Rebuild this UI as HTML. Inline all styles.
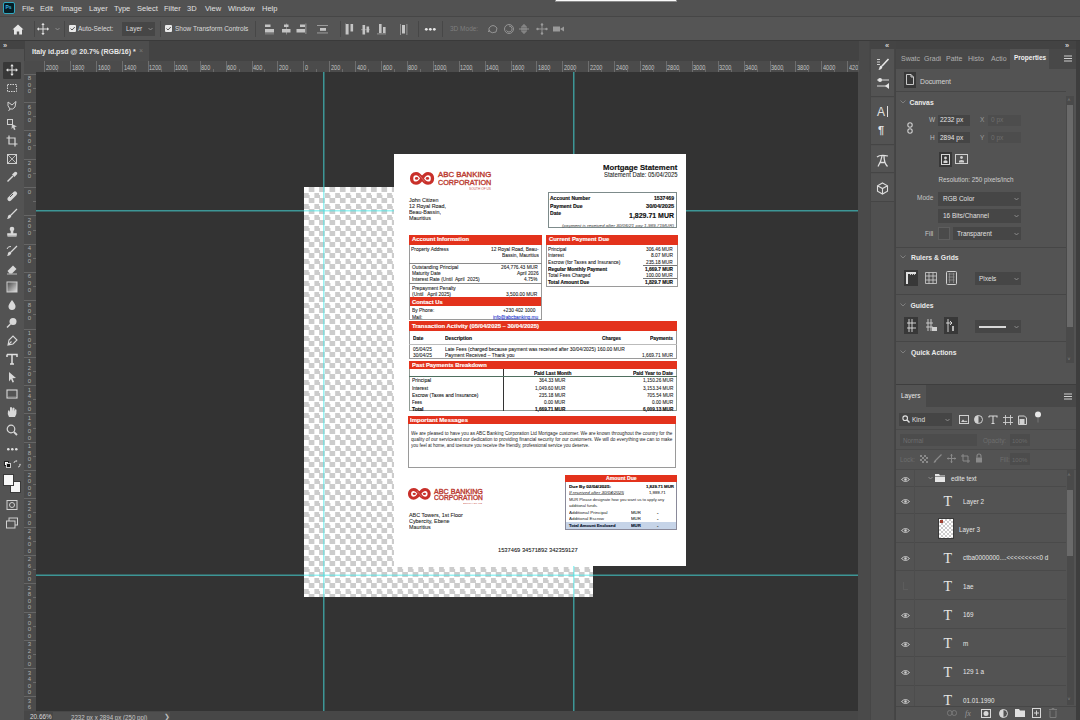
<!DOCTYPE html>
<html><head><meta charset="utf-8">
<style>
*{margin:0;padding:0;box-sizing:border-box}
html,body{width:1080px;height:720px;overflow:hidden;background:#535353;font-family:"Liberation Sans",sans-serif;color:#d6d6d6;-webkit-font-smoothing:antialiased}
.a{position:absolute}
.t{position:absolute;white-space:nowrap;line-height:1}
#menubar{left:0;top:0;width:1080px;height:16px;background:#525252}
#optbar{left:0;top:17px;width:1080px;height:23px;background:#555555}
#sep1{left:0;top:16px;width:1080px;height:1px;background:#464646}
#sep2{left:0;top:40px;width:1080px;height:1px;background:#3a3a3a}
#tabstrip{left:24px;top:41px;width:845px;height:20px;background:#434343}
#tab{left:25px;top:41px;width:124px;height:20px;background:#4d4d4d}
#hruler{left:24px;top:61px;width:834px;height:11px;background:#4b4b4b;overflow:hidden}
#vruler{left:24px;top:72px;width:12px;height:639px;background:#4b4b4b;overflow:hidden}
#hruler i{position:absolute;top:0;width:1px;height:11px;background:#6e6e6e}
#hruler b{position:absolute;top:3.2px;font-weight:normal;font-size:6px;line-height:1;color:#c4c4c4;white-space:nowrap;transform:scale(0.92,1.25);transform-origin:0 0}
#hruler u{position:absolute;top:8px;width:1px;height:3px;background:#6a6a6a}
#hruler .minor{display:none}
#vruler i{position:absolute;left:0;width:12px;height:1px;background:#666}
#vruler b{position:absolute;left:2.5px;font-weight:normal;font-size:6px;line-height:6.6px;color:#b0b0b0;text-align:center;width:6px}
#vruler u{position:absolute;left:9px;width:3px;height:1px;background:#6a6a6a}
#vruler .minor{display:none}
#canvas{left:36px;top:72px;width:822px;height:639px;background:#333333;overflow:hidden}
#status{left:24px;top:711px;width:845px;height:9px;background:#474747}
#ltool{left:0;top:41px;width:24px;height:679px;background:#535353}
#ltoolhead{left:0;top:41px;width:24px;height:8px;background:#434343}
#gap{left:859px;top:41px;width:10px;height:679px;background:#4a4a4a}
#dock{left:869px;top:41px;width:26px;height:679px;background:#474747}
#rpanel{left:895px;top:41px;width:181px;height:679px;background:#535353}
#redge{left:1076px;top:41px;width:4px;height:679px;background:#3f3f3f}
.menu{font-size:7.5px;color:#e0e0e0;top:5px}
.opt{font-size:6.5px;color:#dcdcdc}
.vsep{position:absolute;width:1px;background:#474747}
svg{position:absolute;overflow:visible}
.ic{stroke:#cfcfcf;fill:none;stroke-width:1}
.icf{fill:#cfcfcf}
</style></head><body>

<div id="menubar" class="a"></div>
<div id="sep1" class="a"></div>
<div id="optbar" class="a"></div>
<div id="sep2" class="a"></div>
<div id="tabstrip" class="a"></div>
<div id="tab" class="a"></div>
<div id="hruler" class="a"><div class="a minor"></div><i style="left:20.3px"></i><b style="left:21.8px">2000</b><u style="left:33.3px"></u><i style="left:46.2px"></i><b style="left:47.7px">1800</b><u style="left:59.2px"></u><i style="left:72.1px"></i><b style="left:73.6px">1600</b><u style="left:85.1px"></u><i style="left:98.0px"></i><b style="left:99.5px">1400</b><u style="left:111.0px"></u><i style="left:123.9px"></i><b style="left:125.4px">1200</b><u style="left:136.9px"></u><i style="left:149.8px"></i><b style="left:151.3px">1000</b><u style="left:162.8px"></u><i style="left:175.7px"></i><b style="left:177.2px">800</b><u style="left:188.7px"></u><i style="left:201.6px"></i><b style="left:203.1px">600</b><u style="left:214.6px"></u><i style="left:227.5px"></i><b style="left:229.0px">400</b><u style="left:240.4px"></u><i style="left:253.4px"></i><b style="left:254.9px">200</b><u style="left:266.4px"></u><i style="left:279.3px"></i><b style="left:280.8px">0</b><u style="left:292.2px"></u><i style="left:305.2px"></i><b style="left:306.7px">200</b><u style="left:318.1px"></u><i style="left:331.1px"></i><b style="left:332.6px">400</b><u style="left:344.1px"></u><i style="left:357.0px"></i><b style="left:358.5px">600</b><u style="left:369.9px"></u><i style="left:382.9px"></i><b style="left:384.4px">800</b><u style="left:395.8px"></u><i style="left:408.8px"></i><b style="left:410.3px">1000</b><u style="left:421.8px"></u><i style="left:434.7px"></i><b style="left:436.2px">1200</b><u style="left:447.6px"></u><i style="left:460.6px"></i><b style="left:462.1px">1400</b><u style="left:473.6px"></u><i style="left:486.5px"></i><b style="left:488.0px">1600</b><u style="left:499.4px"></u><i style="left:512.4px"></i><b style="left:513.9px">1800</b><u style="left:525.4px"></u><i style="left:538.3px"></i><b style="left:539.8px">2000</b><u style="left:551.2px"></u><i style="left:564.2px"></i><b style="left:565.7px">2200</b><u style="left:577.2px"></u><i style="left:590.1px"></i><b style="left:591.6px">2400</b><u style="left:603.0px"></u><i style="left:616.0px"></i><b style="left:617.5px">2600</b><u style="left:629.0px"></u><i style="left:641.9px"></i><b style="left:643.4px">2800</b><u style="left:654.9px"></u><i style="left:667.8px"></i><b style="left:669.3px">3000</b><u style="left:680.8px"></u><i style="left:693.7px"></i><b style="left:695.2px">3200</b><u style="left:706.7px"></u><i style="left:719.6px"></i><b style="left:721.1px">3400</b><u style="left:732.5px"></u><i style="left:745.5px"></i><b style="left:747.0px">3600</b><u style="left:758.5px"></u><i style="left:771.4px"></i><b style="left:772.9px">3800</b><u style="left:784.4px"></u><i style="left:797.3px"></i><b style="left:798.8px">4000</b><u style="left:810.2px"></u><i style="left:823.2px"></i><b style="left:824.7px">4200</b><u style="left:836.2px"></u></div>
<div id="vruler" class="a"><div class="a minor"></div><i style="top:1.8px"></i><b style="top:3.3px">8<br>0<br>0</b><u style="top:15.9px"></u><i style="top:30.1px"></i><b style="top:31.6px">6<br>0<br>0</b><u style="top:44.2px"></u><i style="top:58.4px"></i><b style="top:59.9px">4<br>0<br>0</b><u style="top:72.6px"></u><i style="top:86.7px"></i><b style="top:88.2px">2<br>0<br>0</b><u style="top:100.8px"></u><i style="top:115.0px"></i><b style="top:116.5px">0</b><u style="top:129.2px"></u><i style="top:143.3px"></i><b style="top:144.8px">2<br>0<br>0</b><u style="top:157.5px"></u><i style="top:171.6px"></i><b style="top:173.1px">4<br>0<br>0</b><u style="top:185.8px"></u><i style="top:199.9px"></i><b style="top:201.4px">6<br>0<br>0</b><u style="top:214.0px"></u><i style="top:228.2px"></i><b style="top:229.7px">8<br>0<br>0</b><u style="top:242.3px"></u><i style="top:256.5px"></i><b style="top:258.0px">1<br>0<br>0<br>0</b><u style="top:270.6px"></u><i style="top:284.8px"></i><b style="top:286.3px">1<br>2<br>0<br>0</b><u style="top:298.9px"></u><i style="top:313.1px"></i><b style="top:314.6px">1<br>4<br>0<br>0</b><u style="top:327.2px"></u><i style="top:341.4px"></i><b style="top:342.9px">1<br>6<br>0<br>0</b><u style="top:355.5px"></u><i style="top:369.7px"></i><b style="top:371.2px">1<br>8<br>0<br>0</b><u style="top:383.9px"></u><i style="top:398.0px"></i><b style="top:399.5px">2<br>0<br>0<br>0</b><u style="top:412.1px"></u><i style="top:426.3px"></i><b style="top:427.8px">2<br>2<br>0<br>0</b><u style="top:440.4px"></u><i style="top:454.6px"></i><b style="top:456.1px">2<br>4<br>0<br>0</b><u style="top:468.8px"></u><i style="top:482.9px"></i><b style="top:484.4px">2<br>6<br>0<br>0</b><u style="top:497.1px"></u><i style="top:511.2px"></i><b style="top:512.7px">2<br>8<br>0<br>0</b><u style="top:525.4px"></u><i style="top:539.5px"></i><b style="top:541.0px">3<br>0<br>0<br>0</b><u style="top:553.6px"></u><i style="top:567.8px"></i><b style="top:569.3px">3<br>2<br>0<br>0</b><u style="top:581.9px"></u><i style="top:596.1px"></i><b style="top:597.6px">3<br>4<br>0<br>0</b><u style="top:610.2px"></u><i style="top:624.4px"></i><b style="top:625.9px">3<br>6<br>0<br>0</b><u style="top:638.6px"></u></div>
<div class="a" style="left:24px;top:61px;width:12px;height:11px;background:#4b4b4b"></div>
<div id="canvas" class="a"></div>
<div id="status" class="a"></div>
<div class="a" style="left:53px;top:712px;width:117px;height:8px;background:#4f4f4f"></div>
<div class="t" style="left:30px;top:714px;font-size:6.4px;color:#dadada">20.66%</div>
<div class="t" style="left:70.8px;top:714px;font-size:7px;color:#c8c8c8;transform:scaleX(0.88);transform-origin:0 0">2232 px x 2894 px (250 ppi)</div>
<div class="t" style="left:164px;top:713px;font-size:7px;color:#bdbdbd">&#x276F;</div>
<div id="ltool" class="a"></div>
<div id="ltoolhead" class="a"></div>
<div class="t" style="left:3px;top:41.5px;font-size:7.5px;color:#d0d0d0;font-weight:bold">&#187;</div>
<div id="gap" class="a"></div>
<div id="dock" class="a"></div>
<div id="rpanel" class="a"></div>
<div id="redge" class="a"></div>
<div class="a" style="left:3px;top:2px;width:12px;height:12px;background:#061e26;border:1px solid #31a8c0;border-radius:2px"></div>
<div class="t" style="left:5.5px;top:5px;font-size:5px;font-weight:bold;color:#37b4e4">Ps</div>
<div class="t menu" style="left:22px">File</div>
<div class="t menu" style="left:40px">Edit</div>
<div class="t menu" style="left:61px">Image</div>
<div class="t menu" style="left:89px">Layer</div>
<div class="t menu" style="left:114px">Type</div>
<div class="t menu" style="left:137px">Select</div>
<div class="t menu" style="left:164px">Filter</div>
<div class="t menu" style="left:187px">3D</div>
<div class="t menu" style="left:205px">View</div>
<div class="t menu" style="left:228px">Window</div>
<div class="t menu" style="left:262px">Help</div>
<div class="a" style="left:555px;top:0;width:122px;height:2px;background:#fafafa;border:1px solid #8a8a8a;border-top:none"></div>
<!-- options bar -->
<svg style="left:12px;top:24px" width="12" height="11" viewBox="0 0 12 11"><path d="M6 0.5 L11.5 5.5 H10 V10.5 H7.2 V7.5 H4.8 V10.5 H2 V5.5 H0.5 Z" fill="#e6e6e6"/></svg>
<div class="vsep" style="left:34px;top:21px;height:16px"></div>
<svg style="left:37px;top:23px" width="12" height="12" viewBox="0 0 12 12"><path d="M6 0.5V11.5M0.5 6H11.5" stroke="#e0e0e0" stroke-width="1"/><path d="M6 0 L4.3 2 H7.7Z M6 12 L4.3 10 H7.7Z M0 6 L2 4.3 V7.7Z M12 6 L10 4.3 V7.7Z" fill="#e0e0e0"/></svg>
<svg style="left:55px;top:27px" width="5" height="4" viewBox="0 0 5 4"><path d="M0.5 1 L2.5 3 L4.5 1" stroke="#9a9a9a" fill="none" stroke-width="0.8"/></svg>
<div class="vsep" style="left:64px;top:21px;height:16px"></div>
<div class="a" style="left:69px;top:25px;width:7px;height:7px;background:#e8e8e8;border-radius:1px"></div>
<svg style="left:69px;top:25px" width="7" height="7" viewBox="0 0 7 7"><path d="M1.5 3.5 L3 5 L5.8 2" stroke="#555" stroke-width="1" fill="none"/></svg>
<div class="t opt" style="left:78px;top:25.5px">Auto-Select:</div>
<div class="a" style="left:122px;top:22px;width:33px;height:14px;background:#464646"></div>
<div class="t opt" style="left:126px;top:26px">Layer</div>
<svg style="left:148px;top:27px" width="5" height="4" viewBox="0 0 5 4"><path d="M0.5 1 L2.5 3 L4.5 1" stroke="#9a9a9a" fill="none" stroke-width="0.8"/></svg>
<div class="vsep" style="left:160px;top:21px;height:16px"></div>
<div class="a" style="left:165px;top:25px;width:7px;height:7px;background:#e8e8e8;border-radius:1px"></div>
<svg style="left:165px;top:25px" width="7" height="7" viewBox="0 0 7 7"><path d="M1.5 3.5 L3 5 L5.8 2" stroke="#555" stroke-width="1" fill="none"/></svg>
<div class="t opt" style="left:175px;top:25.5px">Show Transform Controls</div>
<div class="vsep" style="left:255px;top:21px;height:16px"></div>
<!-- align icons -->
<svg style="left:0;top:0" width="1080" height="40" viewBox="0 0 1080 40">
<g fill="#c4c4c4">
<rect x="265" y="24.5" width="5.5" height="2.5"/><rect x="265" y="29" width="9" height="3.5"/><rect x="265" y="33.5" width="9" height="0.8" opacity="0.6"/>
<rect x="284" y="24.5" width="4.5" height="2.5"/><rect x="282" y="29" width="8.5" height="3.5"/><rect x="286" y="23.5" width="0.8" height="11" opacity="0.6"/>
<rect x="300" y="24.5" width="5" height="2.5"/><rect x="296.5" y="29" width="8.5" height="3.5"/><rect x="305.5" y="23.5" width="0.8" height="10.5" opacity="0.7"/>
<rect x="317" y="25" width="11" height="0.9" opacity="0.7"/><rect x="320" y="28" width="6" height="2.8"/><rect x="317" y="32.5" width="11" height="0.9" opacity="0.7"/>
<rect x="346" y="24" width="2.6" height="10.5"/><rect x="350.5" y="24" width="2.6" height="7.5"/><rect x="345" y="23.5" width="0.8" height="11" opacity="0.5"/>
<rect x="362.5" y="25" width="2.6" height="9.5"/><rect x="366.5" y="26.5" width="2.6" height="6"/><rect x="361" y="29.3" width="9" height="0.8" opacity="0.6"/>
<rect x="379" y="24" width="2.6" height="9"/><rect x="383" y="27" width="2.6" height="6"/><rect x="377" y="33.5" width="9" height="0.8" opacity="0.7"/>
<rect x="400" y="24" width="0.8" height="11" opacity="0.7"/><rect x="402" y="25" width="3" height="8.5"/><rect x="406.5" y="24" width="0.8" height="11" opacity="0.7"/>
</g></svg>
<div class="vsep" style="left:340px;top:21px;height:16px"></div>
<div class="vsep" style="left:418px;top:21px;height:16px"></div>
<svg style="left:424px;top:27px" width="13" height="5" viewBox="0 0 13 5"><circle cx="2.3" cy="2.3" r="1.4" fill="#e8e8e8"/><circle cx="6.3" cy="2.3" r="1.4" fill="#e8e8e8"/><circle cx="10.3" cy="2.3" r="1.4" fill="#e8e8e8"/></svg>
<div class="vsep" style="left:442px;top:21px;height:16px"></div>
<div class="t opt" style="left:450px;top:26px;color:#7e7e7e">3D Mode:</div>
<svg style="left:487px;top:23px" width="12" height="12" viewBox="0 0 12 12"><path d="M2 5 Q6 0 10 5 L9 9 Q5 11 2 8Z M1 9 L3 7" stroke="#9a9a9a" fill="none" stroke-width="0.9"/></svg>
<svg style="left:503px;top:23px" width="12" height="12" viewBox="0 0 12 12"><circle cx="6" cy="6" r="4.5" stroke="#9a9a9a" fill="none" stroke-width="0.9"/><path d="M6 3 A3 3 0 1 1 3.5 7.5" stroke="#9a9a9a" fill="none" stroke-width="0.9"/></svg>
<svg style="left:518px;top:23px" width="12" height="12" viewBox="0 0 12 12"><path d="M6 1V11M1 6H11M4 3H8V9H4Z" stroke="#9a9a9a" fill="none" stroke-width="0.9"/></svg>
<svg style="left:536px;top:23px" width="12" height="12" viewBox="0 0 12 12"><path d="M6 2V10M2 6H10" stroke="#9a9a9a" stroke-width="0.9"/><circle cx="6" cy="1.5" r="1.2" fill="#9a9a9a"/><circle cx="6" cy="10.5" r="1.2" fill="#9a9a9a"/><circle cx="1.5" cy="6" r="1.2" fill="#9a9a9a"/><circle cx="10.5" cy="6" r="1.2" fill="#9a9a9a"/></svg>
<svg style="left:552px;top:23px" width="13" height="12" viewBox="0 0 13 12"><path d="M1 3.5H8V8.5H1Z M8 6 L12 3.5V8.5Z" fill="#9a9a9a"/></svg>
<!-- tab -->
<div class="t" style="left:32px;top:48px;font-size:7px;color:#e8e8e8;font-weight:bold">Italy id.psd @ 20.7% (RGB/16) *</div>
<div class="t" style="left:139px;top:47px;font-size:7px;color:#7a7a7a">&#215;</div>
<div class="a" style="left:3px;top:62px;width:18px;height:17px;background:#383838;border-radius:1px"></div>
<svg style="left:6px;top:64px" width="12" height="12" viewBox="0 0 12 12"><path d="M6 1V11M1 6H11" stroke="#e6e6e6" stroke-width="1"/><path d="M6 0 L4.3 2.2 H7.7Z M6 12 L4.3 9.8 H7.7Z M0 6 L2.2 4.3 V7.7Z M12 6 L9.8 4.3 V7.7Z" fill="#e6e6e6"/></svg>
<svg style="left:6px;top:82px" width="12" height="12" viewBox="0 0 12 12"><rect x="1.5" y="2.5" width="9" height="7" stroke="#d0d0d0" fill="none" stroke-dasharray="1.5 1" stroke-width="1"/></svg>
<svg style="left:6px;top:100px" width="12" height="12" viewBox="0 0 12 12"><path d="M2 2 L6 5 L10 1.5 L9 7 Q7 10 4 9 L2.5 11 M2 2 Q1 6 4 9" stroke="#d0d0d0" fill="none" stroke-width="1"/></svg>
<svg style="left:6px;top:118px" width="12" height="12" viewBox="0 0 12 12"><rect x="1.5" y="1.5" width="5" height="5" stroke="#d0d0d0" fill="none"/><path d="M6 6 L11 8.5 L8.5 9 L9.5 11.5 L8 12 L7 9.5 L5.5 11Z" fill="#d0d0d0"/></svg>
<svg style="left:6px;top:135px" width="12" height="12" viewBox="0 0 12 12"><path d="M3 0.5V9H11.5 M0.5 3H9V11.5" stroke="#d8d8d8" fill="none" stroke-width="1.2"/></svg>
<svg style="left:6px;top:153px" width="12" height="12" viewBox="0 0 12 12"><rect x="1.5" y="1.5" width="9" height="9" stroke="#d0d0d0" fill="none"/><path d="M1.5 1.5L10.5 10.5M10.5 1.5L1.5 10.5" stroke="#d0d0d0" stroke-width="0.8"/></svg>
<svg style="left:6px;top:171px" width="12" height="12" viewBox="0 0 12 12"><path d="M1.5 10.5 L7 5" stroke="#d8d8d8" stroke-width="1.5"/><path d="M6 3.5 L9 0.8 Q11.5 0.8 11.2 3 L8.5 6Z" fill="#d8d8d8"/></svg>
<svg style="left:6px;top:190px" width="12" height="12" viewBox="0 0 12 12"><path d="M2 7.5 L7.5 2 Q9 0.5 10.5 2 Q12 3.5 10.5 5 L5 10.5 Q3.5 12 2 10.5 Q0.5 9 2 7.5Z" fill="#d8d8d8"/><path d="M4 7 L7 4" stroke="#535353" stroke-width="1"/></svg>
<svg style="left:6px;top:208px" width="12" height="12" viewBox="0 0 12 12"><path d="M11 1 L5 7" stroke="#d8d8d8" stroke-width="1.3"/><path d="M4.5 6.5 Q6 7.5 5 9 Q3.5 11 1 11 Q2 9.5 2 8 Q2.5 6.5 4.5 6.5Z" fill="#d8d8d8"/></svg>
<svg style="left:6px;top:226px" width="12" height="12" viewBox="0 0 12 12"><circle cx="6" cy="3" r="2.3" fill="#d8d8d8"/><path d="M5 5V7.5H1.5V9.5H10.5V7.5H7V5Z M1.5 10.5H10.5" fill="#d8d8d8" stroke="#d8d8d8" stroke-width="0.6"/></svg>
<svg style="left:6px;top:245px" width="12" height="12" viewBox="0 0 12 12"><path d="M11 1 L5 7" stroke="#d8d8d8" stroke-width="1.3"/><path d="M4.5 6.5 Q6 7.5 5 9 Q3.5 11 1 11 Q2 9.5 2 8 Q2.5 6.5 4.5 6.5Z" fill="#d8d8d8"/><path d="M1 4 Q2 1 5 1.5" stroke="#d8d8d8" fill="none"/></svg>
<svg style="left:6px;top:263px" width="12" height="12" viewBox="0 0 12 12"><path d="M1.5 8 L7 2.5 L10.5 6 L6 10.5 H3.5Z" fill="#d8d8d8"/><path d="M1 11H11" stroke="#d8d8d8" stroke-width="0.8"/></svg>
<svg style="left:6px;top:281px" width="12" height="12" viewBox="0 0 12 12"><defs><linearGradient id="gr" x1="0" x2="1" y1="0" y2="1"><stop offset="0" stop-color="#444"/><stop offset="1" stop-color="#e0e0e0"/></linearGradient></defs><rect x="1" y="1" width="10" height="10" fill="url(#gr)" stroke="#d0d0d0"/></svg>
<svg style="left:6px;top:299px" width="12" height="12" viewBox="0 0 12 12"><path d="M6 1 Q10 6 9.5 8 Q9 11 6 11 Q3 11 2.5 8 Q2 6 6 1Z" fill="#d8d8d8"/></svg>
<svg style="left:6px;top:317px" width="12" height="12" viewBox="0 0 12 12"><circle cx="7" cy="4.5" r="3.5" fill="#d8d8d8"/><path d="M4.5 7 L1 10.5" stroke="#d8d8d8" stroke-width="1.5"/></svg>
<svg style="left:6px;top:335px" width="12" height="12" viewBox="0 0 12 12"><path d="M2 10 L3 5 L7 1 L11 5 L7 9Z M2 10 L5.5 6.5" stroke="#d8d8d8" fill="none" stroke-width="1.1"/></svg>
<svg style="left:6px;top:353px" width="12" height="12" viewBox="0 0 12 12"><path d="M1 1.5H11V4 M1 1.5V4 M6 1.5V11 M4 11H8" stroke="#e0e0e0" fill="none" stroke-width="1.5"/></svg>
<svg style="left:6px;top:371px" width="12" height="12" viewBox="0 0 12 12"><path d="M3 1 L10 7 L6.5 7.3 L8 11 L6.5 11.5 L5 8 L3 10.5Z" fill="#d8d8d8"/></svg>
<svg style="left:6px;top:388px" width="12" height="12" viewBox="0 0 12 12"><rect x="1" y="2" width="10" height="8" stroke="#d8d8d8" fill="none" stroke-width="1.1"/><path d="M2 9 H10" stroke="#8a8a8a"/></svg>
<svg style="left:6px;top:406px" width="12" height="12" viewBox="0 0 12 12"><path d="M3 11 Q1 8 2 5 L3 4 L4 6 L4 1.5 Q5 0.5 6 1.5 L6 5 L6.5 2 Q7.5 1 8.5 2 L8.5 5.5 L9 3.5 Q10 3 10.5 4 Q11 8 9 11Z" fill="#d8d8d8"/></svg>
<svg style="left:6px;top:424px" width="12" height="12" viewBox="0 0 12 12"><circle cx="5" cy="5" r="3.8" stroke="#d8d8d8" fill="none" stroke-width="1.2"/><path d="M7.8 7.8 L11 11" stroke="#d8d8d8" stroke-width="1.8"/></svg>
<svg style="left:5.5px;top:447px" width="13" height="5" viewBox="0 0 13 5"><circle cx="2.3" cy="2.3" r="1.3" fill="#e0e0e0"/><circle cx="6.3" cy="2.3" r="1.3" fill="#e0e0e0"/><circle cx="10.3" cy="2.3" r="1.3" fill="#e0e0e0"/></svg>
<div class="a" style="left:4px;top:461px;width:5px;height:5px;background:#fff;border:1px solid #222"></div>
<div class="a" style="left:6px;top:463px;width:5px;height:5px;background:#111;border:1px solid #ccc"></div>
<svg style="left:13px;top:460px" width="8" height="8" viewBox="0 0 8 8"><path d="M1 3 Q1 1 3 1 M5 7 Q7 7 7 5" stroke="#cfcfcf" fill="none"/><path d="M3 0 L4.5 1 L3 2Z M7 3.5 L8 5 L6 5Z" fill="#cfcfcf"/></svg>
<div class="a" style="left:9.5px;top:480.5px;width:11px;height:12.5px;background:#f4f4f4;border:1px solid #3a3a3a"></div>
<div class="a" style="left:3px;top:473.5px;width:11px;height:12.5px;background:#f7f7f7;border:1px solid #3a3a3a"></div>
<svg style="left:6px;top:499px" width="12" height="12" viewBox="0 0 12 12"><rect x="1" y="1.5" width="10" height="9" stroke="#d0d0d0" fill="none"/><circle cx="6" cy="6" r="2.5" stroke="#d0d0d0" fill="none"/></svg>
<svg style="left:6px;top:517px" width="12" height="12" viewBox="0 0 12 12"><rect x="3" y="1" width="8.5" height="7" stroke="#d0d0d0" fill="none"/><rect x="0.5" y="4" width="8.5" height="7" stroke="#d0d0d0" fill="#535353"/></svg>
<div class="a" style="left:36px;top:72px;width:822px;height:639px;overflow:hidden">
<div class="a" style="left:267.5px;top:115px;width:289.5px;height:410px;background:conic-gradient(#cccccc 0 25%,#fff 0 50%,#cccccc 0 75%,#fff 0) 0 0/10.4px 11px"></div>
</div><div class="a" style="left:323px;top:72px;width:1px;height:639px;background:rgba(70,232,232,0.55)"></div>
<div class="a" style="left:324px;top:72px;width:1px;height:639px;background:rgba(70,232,232,0.28)"></div>
<div class="a" style="left:573px;top:72px;width:1px;height:639px;background:rgba(70,232,232,0.55)"></div>
<div class="a" style="left:574px;top:72px;width:1px;height:639px;background:rgba(70,232,232,0.28)"></div>
<div class="a" style="left:36px;top:210px;width:822px;height:1px;background:rgba(70,232,232,0.55)"></div>
<div class="a" style="left:36px;top:211px;width:822px;height:1px;background:rgba(70,232,232,0.28)"></div>
<div class="a" style="left:36px;top:575px;width:822px;height:1px;background:rgba(70,232,232,0.55)"></div>
<div class="a" style="left:36px;top:574px;width:822px;height:1px;background:rgba(70,232,232,0.28)"></div><div class="a" style="left:394px;top:154px;width:292.00px;height:412.00px;background:#fff"></div>
<div class="a" style="left:547.6px;top:192.2px;width:129.20px;height:36.10px;border:1px solid #7d8b8b"></div>
<div class="a" style="left:409px;top:235px;width:132.60px;height:9.70px;background:#e3321c"></div>
<div class="a" style="left:546px;top:235px;width:131.60px;height:9.70px;background:#e3321c"></div>
<div class="a" style="left:409px;top:297.3px;width:132.60px;height:9.00px;background:#e3321c"></div>
<div class="a" style="left:409px;top:321.3px;width:267.70px;height:9.40px;background:#e3321c"></div>
<div class="a" style="left:409px;top:360.7px;width:268.00px;height:8.60px;background:#e3321c"></div>
<div class="a" style="left:408.3px;top:415.6px;width:267.70px;height:8.40px;background:#e3321c"></div>
<div class="a" style="left:565.2px;top:474.8px;width:111.90px;height:7.20px;background:#e3321c"></div>
<div class="a" style="left:409px;top:244.7px;width:132.60px;height:75.70px;border:1px solid #9a9a9a;border-top:none"></div>
<div class="a" style="left:409px;top:262.8px;width:132.60px;height:1.00px;background:#8a8a8a"></div>
<div class="a" style="left:409px;top:283px;width:132.60px;height:1.00px;background:#8a8a8a"></div>
<div class="a" style="left:546px;top:244.7px;width:131.60px;height:42.00px;border:1px solid #9a9a9a;border-top:none"></div>
<div class="a" style="left:643px;top:265px;width:34.00px;height:1.00px;background:#777"></div>
<div class="a" style="left:643px;top:278px;width:34.00px;height:1.00px;background:#777"></div>
<div class="a" style="left:409px;top:330.7px;width:267.70px;height:28.40px;border:1px solid #9a9a9a;border-top:none"></div>
<div class="a" style="left:409px;top:343.8px;width:267.70px;height:1.00px;background:#bbb"></div>
<div class="a" style="left:409px;top:369.3px;width:268.00px;height:42.00px;border:1px solid #8f9a94;border-top:none"></div>
<div class="a" style="left:503px;top:369.3px;width:1.00px;height:42.00px;background:#333"></div>
<div class="a" style="left:409px;top:376.3px;width:268.00px;height:1.00px;background:#4f6f5f"></div>
<div class="a" style="left:408.3px;top:424px;width:267.70px;height:44.40px;border:1px solid #9a9a9a;border-top:none"></div>
<div class="a" style="left:565.2px;top:482px;width:111.90px;height:47.70px;border:1px solid #8a8a9a;border-top:none"></div>
<div class="a" style="left:566.2px;top:522.2px;width:109.90px;height:6.50px;background:#c6d4e8"></div>
<div class="a" style="left:569px;top:494.4px;width:55.00px;height:0.50px;background:#999"></div>
<svg style="left:409.8px;top:171.9px" width="24.1" height="12.8" viewBox="0 0 24 13" preserveAspectRatio="none"><path d="M12 6.5 C14 3 16 1.6 18 1.6 C21 1.6 22.4 4 22.4 6.5 C22.4 9 21 11.4 18 11.4 C16 11.4 14 10 12 6.5 C10 3 8 1.6 6 1.6 C3 1.6 1.6 4 1.6 6.5 C1.6 9 3 11.4 6 11.4 C8 11.4 10 10 12 6.5Z" fill="none" stroke="#c8302a" stroke-width="3.3"/><path d="M9.3 3.2 L14.7 9.8" stroke="#fff" stroke-width="0.5" opacity="0.6"/><ellipse cx="6.6" cy="6.5" rx="1.7" ry="1.3" fill="#c8302a"/><ellipse cx="17.4" cy="6.5" rx="1.7" ry="1.3" fill="#c8302a"/></svg>
<svg style="left:408.3px;top:488.2px" width="22.7" height="11.7" viewBox="0 0 24 13" preserveAspectRatio="none"><path d="M12 6.5 C14 3 16 1.6 18 1.6 C21 1.6 22.4 4 22.4 6.5 C22.4 9 21 11.4 18 11.4 C16 11.4 14 10 12 6.5 C10 3 8 1.6 6 1.6 C3 1.6 1.6 4 1.6 6.5 C1.6 9 3 11.4 6 11.4 C8 11.4 10 10 12 6.5Z" fill="none" stroke="#c8302a" stroke-width="3.3"/><path d="M9.3 3.2 L14.7 9.8" stroke="#fff" stroke-width="0.5" opacity="0.6"/><ellipse cx="6.6" cy="6.5" rx="1.7" ry="1.3" fill="#c8302a"/><ellipse cx="17.4" cy="6.5" rx="1.7" ry="1.3" fill="#c8302a"/></svg><div class="t" style="left:603.20px;top:162.99px;font-size:31.20px;font-weight:bold;color:#111;transform:scale(0.2478,0.25);transform-origin:0 0;-webkit-text-stroke:0.6px currentColor">Mortgage Statement</div>
<div class="t" style="left:604.00px;top:171.16px;font-size:26.00px;color:#222;transform:scale(0.2260,0.25);transform-origin:0 0;-webkit-text-stroke:0.3px currentColor">Statement Date: 05/04/2025</div>
<div class="t" style="left:437.70px;top:171.04px;font-size:29.60px;color:#bb3a2f;transform:scale(0.2635,0.25);transform-origin:0 0;-webkit-text-stroke:1.4px currentColor">ABC BANKING</div>
<div class="t" style="left:437.70px;top:178.74px;font-size:29.60px;color:#bb3a2f;transform:scale(0.2444,0.25);transform-origin:0 0;-webkit-text-stroke:1.4px currentColor">CORPORATION</div>
<div class="t" style="left:469.00px;top:187.66px;font-size:10.40px;color:#c9554b;transform:scale(0.3098,0.25);transform-origin:0 0;">SOUTH OF US</div>
<div class="t" style="left:409.30px;top:197.90px;font-size:20.00px;color:#222;transform:scale(0.2671,0.25);transform-origin:0 0;-webkit-text-stroke:0.3px currentColor">John Citizen</div>
<div class="t" style="left:409.30px;top:204.15px;font-size:20.00px;color:#222;transform:scale(0.2684,0.25);transform-origin:0 0;-webkit-text-stroke:0.3px currentColor">12 Royal Road,</div>
<div class="t" style="left:409.30px;top:210.40px;font-size:20.00px;color:#222;transform:scale(0.2681,0.25);transform-origin:0 0;-webkit-text-stroke:0.3px currentColor">Beau-Bassin,</div>
<div class="t" style="left:409.30px;top:216.35px;font-size:20.00px;color:#222;transform:scale(0.2711,0.25);transform-origin:0 0;-webkit-text-stroke:0.3px currentColor">Mauritius</div>
<div class="t" style="left:550.40px;top:195.82px;font-size:20.80px;font-weight:bold;color:#111;transform:scale(0.2405,0.25);transform-origin:0 0;-webkit-text-stroke:0.6px currentColor">Account Number</div>
<div class="t" style="left:654.00px;top:195.82px;font-size:20.80px;font-weight:bold;color:#111;transform:scale(0.2470,0.25);transform-origin:0 0;-webkit-text-stroke:0.6px currentColor">1537469</div>
<div class="t" style="left:550.40px;top:204.12px;font-size:20.80px;font-weight:bold;color:#111;transform:scale(0.2474,0.25);transform-origin:0 0;-webkit-text-stroke:0.6px currentColor">Payment Due</div>
<div class="t" style="left:645.80px;top:204.12px;font-size:20.80px;font-weight:bold;color:#111;transform:scale(0.2709,0.25);transform-origin:0 0;-webkit-text-stroke:0.6px currentColor">30/04/2025</div>
<div class="t" style="left:550.40px;top:211.32px;font-size:20.80px;font-weight:bold;color:#111;transform:scale(0.2440,0.25);transform-origin:0 0;-webkit-text-stroke:0.6px currentColor">Date</div>
<div class="t" style="left:629.00px;top:212.09px;font-size:28.00px;font-weight:bold;color:#111;transform:scale(0.2492,0.25);transform-origin:0 0;-webkit-text-stroke:0.6px currentColor">1,829.71 MUR</div>
<div class="t" style="left:562.00px;top:223.71px;font-size:15.20px;font-style:italic;color:#666;transform:scale(0.3029,0.25);transform-origin:0 0;-webkit-text-stroke:0.3px currentColor">(payment is received after 30/06/21 pay 1,989.71MUR)</div>
<div class="t" style="left:412.30px;top:236.22px;font-size:24.00px;font-weight:bold;color:#fff;transform:scale(0.2429,0.25);transform-origin:0 0;-webkit-text-stroke:0.6px currentColor">Account Information</div>
<div class="t" style="left:411.00px;top:246.89px;font-size:18.80px;color:#222;transform:scale(0.2617,0.25);transform-origin:0 0;-webkit-text-stroke:0.3px currentColor">Property Address</div>
<div class="t" style="left:491.40px;top:246.89px;font-size:18.80px;color:#222;transform:scale(0.2576,0.25);transform-origin:0 0;-webkit-text-stroke:0.3px currentColor">12 Royal Road, Beau-</div>
<div class="t" style="left:502.10px;top:252.59px;font-size:18.80px;color:#222;transform:scale(0.2580,0.25);transform-origin:0 0;-webkit-text-stroke:0.3px currentColor">Bassin, Mauritius</div>
<div class="t" style="left:412.00px;top:264.59px;font-size:18.80px;color:#222;transform:scale(0.2599,0.25);transform-origin:0 0;-webkit-text-stroke:0.3px currentColor">Outstanding Principal</div>
<div class="t" style="left:500.60px;top:264.59px;font-size:18.80px;color:#222;transform:scale(0.2585,0.25);transform-origin:0 0;-webkit-text-stroke:0.3px currentColor">264,776.43 MUR</div>
<div class="t" style="left:412.00px;top:271.19px;font-size:18.80px;color:#222;transform:scale(0.2579,0.25);transform-origin:0 0;-webkit-text-stroke:0.3px currentColor">Maturity Date</div>
<div class="t" style="left:517.40px;top:271.19px;font-size:18.80px;color:#222;transform:scale(0.2554,0.25);transform-origin:0 0;-webkit-text-stroke:0.3px currentColor">April 2026</div>
<div class="t" style="left:412.00px;top:277.19px;font-size:18.80px;color:#222;white-space:pre;transform:scale(0.2584,0.25);transform-origin:0 0;-webkit-text-stroke:0.3px currentColor">Interest Rate (Until  April  2025)</div>
<div class="t" style="left:523.70px;top:277.19px;font-size:18.80px;color:#222;transform:scale(0.2497,0.25);transform-origin:0 0;-webkit-text-stroke:0.3px currentColor">4.75%</div>
<div class="t" style="left:412.00px;top:285.89px;font-size:18.80px;color:#222;transform:scale(0.2584,0.25);transform-origin:0 0;-webkit-text-stroke:0.3px currentColor">Prepayment Penalty</div>
<div class="t" style="left:412.00px;top:292.19px;font-size:18.80px;color:#222;white-space:pre;transform:scale(0.2613,0.25);transform-origin:0 0;-webkit-text-stroke:0.3px currentColor">(Until   April 2025)</div>
<div class="t" style="left:505.70px;top:292.19px;font-size:18.80px;color:#222;transform:scale(0.2584,0.25);transform-origin:0 0;-webkit-text-stroke:0.3px currentColor">3,500.00 MUR</div>
<div class="t" style="left:412.00px;top:298.72px;font-size:24.00px;font-weight:bold;color:#fff;transform:scale(0.2423,0.25);transform-origin:0 0;-webkit-text-stroke:0.6px currentColor">Contact Us</div>
<div class="t" style="left:412.00px;top:308.19px;font-size:18.80px;color:#222;transform:scale(0.2584,0.25);transform-origin:0 0;-webkit-text-stroke:0.3px currentColor">By Phone:</div>
<div class="t" style="left:503.30px;top:308.19px;font-size:18.80px;color:#222;transform:scale(0.2574,0.25);transform-origin:0 0;-webkit-text-stroke:0.3px currentColor">+230 402 1000</div>
<div class="t" style="left:412.00px;top:314.89px;font-size:18.80px;color:#222;transform:scale(0.2623,0.25);transform-origin:0 0;-webkit-text-stroke:0.3px currentColor">Mail:</div>
<div class="t" style="left:492.70px;top:314.89px;font-size:18.80px;color:#2233cc;text-decoration:underline;transform:scale(0.2563,0.25);transform-origin:0 0;-webkit-text-stroke:0.3px currentColor">info@abcbanking.mu</div>
<div class="t" style="left:549.00px;top:236.22px;font-size:24.00px;font-weight:bold;color:#fff;transform:scale(0.2457,0.25);transform-origin:0 0;-webkit-text-stroke:0.6px currentColor">Current Payment Due</div>
<div class="t" style="left:548.30px;top:246.69px;font-size:18.80px;color:#222;transform:scale(0.2554,0.25);transform-origin:0 0;-webkit-text-stroke:0.3px currentColor">Principal</div>
<div class="t" style="left:646.00px;top:246.69px;font-size:18.80px;color:#222;transform:scale(0.2532,0.25);transform-origin:0 0;-webkit-text-stroke:0.3px currentColor">306.46 MUR</div>
<div class="t" style="left:548.30px;top:253.19px;font-size:18.80px;color:#222;transform:scale(0.2506,0.25);transform-origin:0 0;-webkit-text-stroke:0.3px currentColor">Interest</div>
<div class="t" style="left:650.70px;top:253.19px;font-size:18.80px;color:#222;transform:scale(0.2602,0.25);transform-origin:0 0;-webkit-text-stroke:0.3px currentColor">8.07 MUR</div>
<div class="t" style="left:548.30px;top:259.89px;font-size:18.80px;color:#222;transform:scale(0.2591,0.25);transform-origin:0 0;-webkit-text-stroke:0.3px currentColor">Escrow (for Taxes and Insurance)</div>
<div class="t" style="left:646.00px;top:259.89px;font-size:18.80px;color:#222;transform:scale(0.2532,0.25);transform-origin:0 0;-webkit-text-stroke:0.3px currentColor">235.18 MUR</div>
<div class="t" style="left:548.30px;top:266.69px;font-size:18.80px;font-weight:bold;color:#111;transform:scale(0.2558,0.25);transform-origin:0 0;-webkit-text-stroke:0.6px currentColor">Regular Monthly Payment</div>
<div class="t" style="left:644.70px;top:266.69px;font-size:18.80px;font-weight:bold;color:#111;transform:scale(0.2530,0.25);transform-origin:0 0;-webkit-text-stroke:0.6px currentColor">1,669.7 MUR</div>
<div class="t" style="left:548.30px;top:273.39px;font-size:18.80px;color:#222;transform:scale(0.2587,0.25);transform-origin:0 0;-webkit-text-stroke:0.3px currentColor">Total Fees Charged</div>
<div class="t" style="left:646.00px;top:273.39px;font-size:18.80px;color:#222;transform:scale(0.2532,0.25);transform-origin:0 0;-webkit-text-stroke:0.3px currentColor">100.00 MUR</div>
<div class="t" style="left:548.30px;top:280.19px;font-size:18.80px;font-weight:bold;color:#111;transform:scale(0.2587,0.25);transform-origin:0 0;-webkit-text-stroke:0.6px currentColor">Total Amount Due</div>
<div class="t" style="left:644.70px;top:280.19px;font-size:18.80px;font-weight:bold;color:#111;transform:scale(0.2530,0.25);transform-origin:0 0;-webkit-text-stroke:0.6px currentColor">1,829.7 MUR</div>
<div class="t" style="left:412.00px;top:322.72px;font-size:24.00px;font-weight:bold;color:#fff;transform:scale(0.2458,0.25);transform-origin:0 0;-webkit-text-stroke:0.6px currentColor">Transaction Activity (05/04/2025 – 30/04/2025)</div>
<div class="t" style="left:413.00px;top:335.79px;font-size:18.80px;font-weight:bold;color:#111;transform:scale(0.2530,0.25);transform-origin:0 0;-webkit-text-stroke:0.6px currentColor">Date</div>
<div class="t" style="left:445.00px;top:335.79px;font-size:18.80px;font-weight:bold;color:#111;transform:scale(0.2613,0.25);transform-origin:0 0;-webkit-text-stroke:0.6px currentColor">Description</div>
<div class="t" style="left:601.60px;top:335.79px;font-size:18.80px;font-weight:bold;color:#111;transform:scale(0.2528,0.25);transform-origin:0 0;-webkit-text-stroke:0.6px currentColor">Charges</div>
<div class="t" style="left:650.00px;top:335.79px;font-size:18.80px;font-weight:bold;color:#111;transform:scale(0.2592,0.25);transform-origin:0 0;-webkit-text-stroke:0.6px currentColor">Payments</div>
<div class="t" style="left:413.00px;top:346.89px;font-size:18.80px;color:#222;transform:scale(0.2599,0.25);transform-origin:0 0;-webkit-text-stroke:0.3px currentColor">05/04/25</div>
<div class="t" style="left:445.00px;top:346.89px;font-size:18.80px;color:#222;transform:scale(0.2604,0.25);transform-origin:0 0;-webkit-text-stroke:0.3px currentColor">Late Fees (charged because payment was received after 30/04/2025) 160.00 MUR</div>
<div class="t" style="left:413.00px;top:353.49px;font-size:18.80px;color:#222;transform:scale(0.2599,0.25);transform-origin:0 0;-webkit-text-stroke:0.3px currentColor">30/04/25</div>
<div class="t" style="left:445.00px;top:353.49px;font-size:18.80px;color:#222;transform:scale(0.2618,0.25);transform-origin:0 0;-webkit-text-stroke:0.3px currentColor">Payment Received – Thank you</div>
<div class="t" style="left:642.00px;top:353.49px;font-size:18.80px;color:#222;transform:scale(0.2560,0.25);transform-origin:0 0;-webkit-text-stroke:0.3px currentColor">1,669.71 MUR</div>
<div class="t" style="left:412.00px;top:361.72px;font-size:24.00px;font-weight:bold;color:#fff;transform:scale(0.2435,0.25);transform-origin:0 0;-webkit-text-stroke:0.6px currentColor">Past Payments Breakdown</div>
<div class="t" style="left:534.40px;top:371.19px;font-size:18.80px;font-weight:bold;color:#111;transform:scale(0.2592,0.25);transform-origin:0 0;-webkit-text-stroke:0.6px currentColor">Paid Last Month</div>
<div class="t" style="left:633.00px;top:371.19px;font-size:18.80px;font-weight:bold;color:#111;transform:scale(0.2613,0.25);transform-origin:0 0;-webkit-text-stroke:0.6px currentColor">Paid Year to Date</div>
<div class="t" style="left:412.00px;top:377.79px;font-size:18.80px;color:#111;transform:scale(0.2638,0.25);transform-origin:0 0;-webkit-text-stroke:0.3px currentColor">Principal</div>
<div class="t" style="left:538.94px;top:377.79px;font-size:18.80px;color:#222;transform:scale(0.2500,0.25);transform-origin:0 0;-webkit-text-stroke:0.3px currentColor">364.33 MUR</div>
<div class="t" style="left:642.72px;top:377.79px;font-size:18.80px;color:#222;transform:scale(0.2500,0.25);transform-origin:0 0;-webkit-text-stroke:0.3px currentColor">1,150.26 MUR</div>
<div class="t" style="left:412.00px;top:385.69px;font-size:18.80px;color:#111;transform:scale(0.2554,0.25);transform-origin:0 0;-webkit-text-stroke:0.3px currentColor">Interest</div>
<div class="t" style="left:535.02px;top:385.69px;font-size:18.80px;color:#222;transform:scale(0.2500,0.25);transform-origin:0 0;-webkit-text-stroke:0.3px currentColor">1,049.60 MUR</div>
<div class="t" style="left:642.72px;top:385.69px;font-size:18.80px;color:#222;transform:scale(0.2500,0.25);transform-origin:0 0;-webkit-text-stroke:0.3px currentColor">3,153.34 MUR</div>
<div class="t" style="left:412.00px;top:392.69px;font-size:18.80px;color:#111;transform:scale(0.2628,0.25);transform-origin:0 0;-webkit-text-stroke:0.3px currentColor">Escrow (Taxes and Insurance)</div>
<div class="t" style="left:538.94px;top:392.69px;font-size:18.80px;color:#222;transform:scale(0.2500,0.25);transform-origin:0 0;-webkit-text-stroke:0.3px currentColor">235.18 MUR</div>
<div class="t" style="left:646.64px;top:392.69px;font-size:18.80px;color:#222;transform:scale(0.2500,0.25);transform-origin:0 0;-webkit-text-stroke:0.3px currentColor">705.54 MUR</div>
<div class="t" style="left:412.00px;top:399.69px;font-size:18.80px;color:#111;transform:scale(0.2394,0.25);transform-origin:0 0;-webkit-text-stroke:0.3px currentColor">Fees</div>
<div class="t" style="left:544.16px;top:399.69px;font-size:18.80px;color:#222;transform:scale(0.2500,0.25);transform-origin:0 0;-webkit-text-stroke:0.3px currentColor">0.00 MUR</div>
<div class="t" style="left:651.86px;top:399.69px;font-size:18.80px;color:#222;transform:scale(0.2500,0.25);transform-origin:0 0;-webkit-text-stroke:0.3px currentColor">0.00 MUR</div>
<div class="t" style="left:412.00px;top:406.69px;font-size:18.80px;font-weight:bold;color:#111;transform:scale(0.2646,0.25);transform-origin:0 0;-webkit-text-stroke:0.6px currentColor">Total</div>
<div class="t" style="left:535.02px;top:406.69px;font-size:18.80px;font-weight:bold;color:#222;transform:scale(0.2500,0.25);transform-origin:0 0;-webkit-text-stroke:0.6px currentColor">1,669.71 MUR</div>
<div class="t" style="left:642.72px;top:406.69px;font-size:18.80px;font-weight:bold;color:#222;transform:scale(0.2500,0.25);transform-origin:0 0;-webkit-text-stroke:0.6px currentColor">6,009.13 MUR</div>
<div class="t" style="left:410.00px;top:416.72px;font-size:24.00px;font-weight:bold;color:#fff;transform:scale(0.2499,0.25);transform-origin:0 0;-webkit-text-stroke:0.6px currentColor">Important Messages</div>
<div class="t" style="left:411.30px;top:430.60px;font-size:18.40px;color:#222;transform:scale(0.2526,0.25);transform-origin:0 0;">We are pleased to have you as ABC Banking Corporation Ltd Mortgage customer. We are known throughout the country for the</div>
<div class="t" style="left:411.30px;top:436.60px;font-size:18.40px;color:#222;transform:scale(0.2545,0.25);transform-origin:0 0;">quality of our serviceand our dedication to providing financial security for our customers. We will do everything we can to make</div>
<div class="t" style="left:411.30px;top:442.70px;font-size:18.40px;color:#222;transform:scale(0.2444,0.25);transform-origin:0 0;">you feel at home, and toensure you receive the friendly, professional service you deserve.</div>
<div class="t" style="left:605.85px;top:476.42px;font-size:20.80px;font-weight:bold;color:#fff;transform:scale(0.2483,0.25);transform-origin:0 0;-webkit-text-stroke:0.6px currentColor">Amount Due</div>
<div class="t" style="left:569.00px;top:483.54px;font-size:17.20px;font-weight:bold;color:#111;transform:scale(0.2697,0.25);transform-origin:0 0;-webkit-text-stroke:0.6px currentColor">Due By 02/04/2025:</div>
<div class="t" style="left:645.70px;top:483.54px;font-size:17.20px;font-weight:bold;color:#111;transform:scale(0.2526,0.25);transform-origin:0 0;-webkit-text-stroke:0.6px currentColor">1,829.71 MUR</div>
<div class="t" style="left:569.00px;top:490.04px;font-size:17.20px;font-style:italic;color:#222;transform:scale(0.2628,0.25);transform-origin:0 0;">If received after 30/04/2025</div>
<div class="t" style="left:649.00px;top:490.04px;font-size:17.20px;color:#333;transform:scale(0.2481,0.25);transform-origin:0 0;-webkit-text-stroke:0.3px currentColor">1,989.71</div>
<div class="t" style="left:569.00px;top:496.54px;font-size:17.20px;color:#222;transform:scale(0.2347,0.25);transform-origin:0 0;">MUR Please designate how you want us to apply any</div>
<div class="t" style="left:569.00px;top:502.54px;font-size:17.20px;color:#222;transform:scale(0.2293,0.25);transform-origin:0 0;">additional funds.</div>
<div class="t" style="left:569.00px;top:509.54px;font-size:17.20px;color:#222;transform:scale(0.2634,0.25);transform-origin:0 0;">Additional Principal</div>
<div class="t" style="left:630.60px;top:509.54px;font-size:17.20px;color:#222;transform:scale(0.2500,0.25);transform-origin:0 0;-webkit-text-stroke:0.3px currentColor">MUR</div>
<div class="t" style="left:657.00px;top:509.54px;font-size:17.20px;color:#222;transform:scale(0.2500,0.25);transform-origin:0 0;-webkit-text-stroke:0.3px currentColor">-</div>
<div class="t" style="left:569.00px;top:516.04px;font-size:17.20px;color:#222;transform:scale(0.2562,0.25);transform-origin:0 0;">Additional Escrow</div>
<div class="t" style="left:630.60px;top:516.04px;font-size:17.20px;color:#222;transform:scale(0.2500,0.25);transform-origin:0 0;-webkit-text-stroke:0.3px currentColor">MUR</div>
<div class="t" style="left:657.00px;top:516.04px;font-size:17.20px;color:#222;transform:scale(0.2500,0.25);transform-origin:0 0;-webkit-text-stroke:0.3px currentColor">-</div>
<div class="t" style="left:569.00px;top:523.04px;font-size:17.20px;font-weight:bold;color:#111a33;transform:scale(0.2447,0.25);transform-origin:0 0;-webkit-text-stroke:0.6px currentColor">Total Amount Enclosed</div>
<div class="t" style="left:630.60px;top:523.04px;font-size:17.20px;font-weight:bold;color:#111a33;transform:scale(0.2500,0.25);transform-origin:0 0;-webkit-text-stroke:0.6px currentColor">MUR</div>
<div class="t" style="left:657.00px;top:523.04px;font-size:17.20px;color:#222;transform:scale(0.2500,0.25);transform-origin:0 0;-webkit-text-stroke:0.3px currentColor">-</div>
<div class="t" style="left:433.90px;top:487.53px;font-size:26.80px;color:#bb3a2f;transform:scale(0.2670,0.25);transform-origin:0 0;-webkit-text-stroke:1.4px currentColor">ABC BANKING</div>
<div class="t" style="left:433.90px;top:494.13px;font-size:26.80px;color:#bb3a2f;transform:scale(0.2476,0.25);transform-origin:0 0;-webkit-text-stroke:1.4px currentColor">CORPORATION</div>
<div class="t" style="left:463.00px;top:502.29px;font-size:9.60px;color:#c9554b;transform:scale(0.2898,0.25);transform-origin:0 0;">SOUTH OF US</div>
<div class="t" style="left:409.40px;top:512.07px;font-size:22.40px;color:#222;transform:scale(0.2424,0.25);transform-origin:0 0;-webkit-text-stroke:0.3px currentColor">ABC Towers, 1st Floor</div>
<div class="t" style="left:409.40px;top:518.07px;font-size:22.40px;color:#222;transform:scale(0.2405,0.25);transform-origin:0 0;-webkit-text-stroke:0.3px currentColor">Cybercity, Ebene</div>
<div class="t" style="left:409.40px;top:524.07px;font-size:22.40px;color:#222;transform:scale(0.2389,0.25);transform-origin:0 0;-webkit-text-stroke:0.3px currentColor">Mauritius</div>
<div class="t" style="left:497.80px;top:546.72px;font-size:24.00px;color:#111;transform:scale(0.2388,0.25);transform-origin:0 0;-webkit-text-stroke:0.3px currentColor">1537469 34571892 342359127</div><!-- gap + dock -->
<div class="a" style="left:858px;top:72px;width:12px;height:648px;background:#4a4a4a"></div>
<div class="a" style="left:870px;top:41px;width:25px;height:8px;background:#444"></div>
<div class="t" style="left:885px;top:41.5px;font-size:7.5px;color:#d0d0d0;font-weight:bold">&#171;</div>
<div class="a" style="left:870px;top:49px;width:25px;height:671px;background:#505050;border-left:1px solid #464646;border-right:1px solid #464646"></div>
<div class="a" style="left:871px;top:49px;width:23px;height:48px;background:#535353;border-bottom:1px solid #454545"></div>
<div class="a" style="left:871px;top:98px;width:23px;height:47px;background:#535353;border-bottom:1px solid #454545"></div>
<div class="a" style="left:871px;top:146px;width:23px;height:27px;background:#535353;border-bottom:1px solid #454545"></div>
<div class="a" style="left:871px;top:174px;width:23px;height:28px;background:#535353;border-bottom:1px solid #454545"></div>
<svg style="left:876px;top:58px" width="14" height="13" viewBox="0 0 14 13"><path d="M1 1.5H4M1 4H4M1 6.5H4" stroke="#dcdcdc" stroke-width="0.9"/><path d="M12.5 1 L6 8" stroke="#e6e6e6" stroke-width="1.6"/><path d="M5.5 7.5 Q7 8.8 6 10.3 Q4.6 12 2.5 12 Q3.3 10.6 3.4 9.4 Q3.8 7.6 5.5 7.5Z" fill="#e6e6e6"/></svg>
<svg style="left:876px;top:77px" width="14" height="13" viewBox="0 0 14 13"><path d="M1 3H13M1 9H13" stroke="#dcdcdc" stroke-width="1"/><circle cx="4" cy="3" r="2" fill="#e6e6e6"/><path d="M13 6 L9 9 L13 12Z" fill="#e6e6e6"/></svg>
<div class="t" style="left:877px;top:106px;font-size:12px;color:#e0e0e0">A</div>
<div class="a" style="left:887px;top:106px;width:1px;height:11px;background:#e0e0e0"></div>
<div class="t" style="left:878px;top:125px;font-size:11px;color:#e0e0e0;font-weight:bold">&#182;</div>
<svg style="left:876px;top:154px" width="14" height="14" viewBox="0 0 14 14"><path d="M1 3 Q4 0.5 12 2" stroke="#e0e0e0" fill="none" stroke-width="1.2"/><path d="M6 2 Q5 8 2 12.5 M8 2 Q8 9 11.5 12.5 M4.5 8.5 H9.5" stroke="#e0e0e0" fill="none" stroke-width="1.3"/></svg>
<svg style="left:876px;top:182px" width="13" height="13" viewBox="0 0 13 13"><path d="M6.5 1 L11.5 3.8 V9.2 L6.5 12 L1.5 9.2 V3.8Z M1.5 3.8 L6.5 6.5 L11.5 3.8 M6.5 6.5V12" stroke="#dcdcdc" fill="none" stroke-width="1.1"/></svg>
<!-- right panel base -->
<div class="a" style="left:895px;top:41px;width:181px;height:679px;background:#535353;border-left:1px solid #444"></div>
<div class="a" style="left:896px;top:41px;width:180px;height:8px;background:#434343"></div>
<div class="t" style="left:1065px;top:41.5px;font-size:7.5px;color:#d0d0d0;font-weight:bold">&#187;</div>
<div class="a" style="left:1076px;top:41px;width:4px;height:679px;background:#3e3e3e"></div>
<!-- properties tabs -->
<div class="a" style="left:896px;top:49px;width:180px;height:20px;background:#484848"></div>
<div class="a" style="left:1010px;top:49px;width:39px;height:20px;background:#535353"></div>
<div class="t" style="left:901px;top:55px;font-size:7px;color:#b0b0b0">Swatc</div>
<div class="t" style="left:924px;top:55px;font-size:7px;color:#b0b0b0">Gradi</div>
<div class="t" style="left:946px;top:55px;font-size:7px;color:#b0b0b0">Patte</div>
<div class="t" style="left:968px;top:55px;font-size:7px;color:#b0b0b0">Histo</div>
<div class="t" style="left:991px;top:55px;font-size:7px;color:#b0b0b0">Actio</div>
<div class="t" style="left:1014px;top:55px;font-size:6.5px;color:#f0f0f0;font-weight:bold">Properties</div>
<svg style="left:1064px;top:55px" width="8" height="7" viewBox="0 0 8 7"><path d="M0 1H8M0 3.5H8M0 6H8" stroke="#cfcfcf" stroke-width="1"/></svg>
<!-- document row -->
<div class="a" style="left:904px;top:72px;width:12px;height:16px;background:#383838"></div>
<svg style="left:906px;top:74px" width="8" height="11" viewBox="0 0 8 11"><path d="M0.5 0.5H5L7.5 3V10.5H0.5Z M5 0.5V3H7.5" stroke="#d8d8d8" fill="none" stroke-width="0.9"/></svg>
<div class="t" style="left:920px;top:78.5px;font-size:6.8px;color:#d6d6d6">Document</div>
<div class="a" style="left:896px;top:91px;width:170px;height:1px;background:#464646"></div>
<!-- canvas section -->
<svg style="left:900px;top:100px" width="6" height="4" viewBox="0 0 6 4"><path d="M0.5 0.5 L3 3 L5.5 0.5" stroke="#8a8a8a" fill="none" stroke-width="0.8"/></svg>
<div class="t" style="left:909.5px;top:100px;font-size:6.8px;color:#eaeaea;font-weight:bold">Canvas</div>
<svg style="left:907px;top:122px" width="6" height="12" viewBox="0 0 6 12"><circle cx="3" cy="3" r="2.2" stroke="#cfcfcf" fill="none" stroke-width="1.1"/><circle cx="3" cy="9" r="2.2" stroke="#cfcfcf" fill="none" stroke-width="1.1"/></svg>
<div class="t" style="left:929px;top:117px;font-size:6.5px;color:#bdbdbd">W</div>
<div class="a" style="left:938px;top:114.5px;width:32px;height:11px;background:#454545"></div>
<div class="t" style="left:940px;top:117px;font-size:6.5px;color:#e6e6e6">2232 px</div>
<div class="t" style="left:980px;top:117px;font-size:6.5px;color:#9a9a9a">X</div>
<div class="a" style="left:988px;top:114.5px;width:33px;height:11px;background:#4d4d4d"></div>
<div class="t" style="left:991px;top:117px;font-size:6.5px;color:#6f6f6f">0 px</div>
<div class="t" style="left:930px;top:134.5px;font-size:6.5px;color:#bdbdbd">H</div>
<div class="a" style="left:938px;top:132px;width:32px;height:11px;background:#454545"></div>
<div class="t" style="left:940px;top:134.5px;font-size:6.5px;color:#e6e6e6">2894 px</div>
<div class="t" style="left:980px;top:134.5px;font-size:6.5px;color:#9a9a9a">Y</div>
<div class="a" style="left:988px;top:132px;width:33px;height:11px;background:#4d4d4d"></div>
<div class="t" style="left:991px;top:134.5px;font-size:6.5px;color:#6f6f6f">0 px</div>
<div class="a" style="left:939px;top:152px;width:13px;height:15px;background:#383838"></div>
<svg style="left:941px;top:154px" width="9" height="11" viewBox="0 0 9 11"><rect x="0.5" y="0.5" width="8" height="10" stroke="#d6d6d6" fill="none"/><circle cx="4.5" cy="4" r="1.4" fill="#d6d6d6"/><path d="M2.5 9V7Q4.5 5.5 6.5 7V9Z" fill="#d6d6d6"/></svg>
<svg style="left:955px;top:154px" width="13" height="10" viewBox="0 0 13 10"><rect x="0.5" y="0.5" width="12" height="9" stroke="#cfcfcf" fill="none"/><circle cx="6.5" cy="3.5" r="1.4" fill="#cfcfcf"/><path d="M4 8.5V6.8Q6.5 5 9 6.8V8.5Z" fill="#cfcfcf"/></svg>
<div class="t" style="left:938.5px;top:177px;font-size:6.3px;color:#d0d0d0">Resolution: 250 pixels/inch</div>
<div class="t" style="left:917px;top:195px;font-size:6.5px;color:#c4c4c4">Mode</div>
<div class="a" style="left:938px;top:192px;width:83px;height:13.5px;background:#464646"></div>
<div class="t" style="left:943px;top:195.5px;font-size:6.5px;color:#e0e0e0">RGB Color</div>
<svg style="left:1014px;top:197px" width="5" height="4" viewBox="0 0 5 4"><path d="M0.5 1 L2.5 3 L4.5 1" stroke="#9a9a9a" fill="none" stroke-width="0.8"/></svg>
<div class="a" style="left:938px;top:209px;width:83px;height:13.5px;background:#464646"></div>
<div class="t" style="left:943px;top:212.5px;font-size:6.5px;color:#e0e0e0">16 Bits/Channel</div>
<svg style="left:1014px;top:214px" width="5" height="4" viewBox="0 0 5 4"><path d="M0.5 1 L2.5 3 L4.5 1" stroke="#9a9a9a" fill="none" stroke-width="0.8"/></svg>
<div class="t" style="left:925px;top:230.5px;font-size:6.5px;color:#c4c4c4">Fill</div>
<div class="a" style="left:938px;top:227px;width:12px;height:13px;background:#4a4a4a;border:1px solid #5e5e5e"></div>
<div class="a" style="left:953px;top:226.5px;width:68px;height:13.5px;background:#464646"></div>
<div class="t" style="left:957px;top:230.5px;font-size:6.5px;color:#e0e0e0">Transparent</div>
<svg style="left:1014px;top:232px" width="5" height="4" viewBox="0 0 5 4"><path d="M0.5 1 L2.5 3 L4.5 1" stroke="#9a9a9a" fill="none" stroke-width="0.8"/></svg>
<div class="a" style="left:896px;top:247px;width:170px;height:1px;background:#464646"></div>
<!-- rulers & grids -->
<svg style="left:900px;top:255px" width="6" height="4" viewBox="0 0 6 4"><path d="M0.5 0.5 L3 3 L5.5 0.5" stroke="#8a8a8a" fill="none" stroke-width="0.8"/></svg>
<div class="t" style="left:911px;top:255px;font-size:6.8px;color:#eaeaea;font-weight:bold">Rulers &amp; Grids</div>
<div class="a" style="left:904px;top:270px;width:14px;height:16px;background:#383838"></div>
<svg style="left:906px;top:272px" width="10" height="12" viewBox="0 0 10 12"><path d="M1 12V1H10" stroke="#e0e0e0" stroke-width="2" fill="none"/><path d="M4 2.5H9" stroke="#e0e0e0" stroke-width="0.8" stroke-dasharray="1 1"/></svg>
<svg style="left:925px;top:272px" width="12" height="12" viewBox="0 0 12 12"><path d="M0.5 0.5H11.5V11.5H0.5Z M4 0.5V11.5M8 0.5V11.5M0.5 4H11.5M0.5 8H11.5" stroke="#d0d0d0" fill="none" stroke-width="0.8"/></svg>
<svg style="left:946px;top:271px" width="11" height="14" viewBox="0 0 11 14"><rect x="0.5" y="0.5" width="10" height="13" rx="1" stroke="#d0d0d0" fill="none"/><path d="M2.5 3H8.5M2.5 6H8.5M2.5 9H8.5M3.5 2V12M7.5 2V12" stroke="#a0a0a0" stroke-width="0.6"/></svg>
<div class="a" style="left:975px;top:272px;width:46px;height:12.5px;background:#464646"></div>
<div class="t" style="left:979px;top:275.5px;font-size:6.5px;color:#e0e0e0">Pixels</div>
<svg style="left:1014px;top:277px" width="5" height="4" viewBox="0 0 5 4"><path d="M0.5 1 L2.5 3 L4.5 1" stroke="#9a9a9a" fill="none" stroke-width="0.8"/></svg>
<div class="a" style="left:896px;top:294px;width:170px;height:1px;background:#464646"></div>
<!-- guides -->
<svg style="left:900px;top:303px" width="6" height="4" viewBox="0 0 6 4"><path d="M0.5 0.5 L3 3 L5.5 0.5" stroke="#8a8a8a" fill="none" stroke-width="0.8"/></svg>
<div class="t" style="left:910.5px;top:303px;font-size:6.8px;color:#eaeaea;font-weight:bold">Guides</div>
<div class="a" style="left:904px;top:317px;width:14px;height:17px;background:#383838"></div>
<svg style="left:906px;top:319px" width="10" height="13" viewBox="0 0 10 13"><path d="M3 0V13M6 0V13M1 4H10M1 9H10" stroke="#e0e0e0" stroke-width="0.9" fill="none"/></svg>
<svg style="left:926px;top:319px" width="11" height="13" viewBox="0 0 11 13"><path d="M2 0V12M5 0V12M0 4H7M0 8H7" stroke="#d0d0d0" stroke-width="0.9" fill="none"/><rect x="6" y="8" width="5" height="4" fill="#d0d0d0"/></svg>
<div class="a" style="left:944px;top:317px;width:14px;height:17px;background:#383838"></div>
<svg style="left:946px;top:319px" width="10" height="13" viewBox="0 0 10 13"><path d="M2 0V13M0 4H6 M4 2 L6 4 L4 6" stroke="#e0e0e0" stroke-width="0.9" fill="none"/><path d="M7 7V12" stroke="#e0e0e0" stroke-width="1.5"/></svg>
<div class="a" style="left:975px;top:320px;width:46px;height:13px;background:#464646"></div>
<div class="a" style="left:979px;top:326px;width:27px;height:1.5px;background:#d8d8d8"></div>
<svg style="left:1014px;top:325px" width="5" height="4" viewBox="0 0 5 4"><path d="M0.5 1 L2.5 3 L4.5 1" stroke="#9a9a9a" fill="none" stroke-width="0.8"/></svg>
<div class="a" style="left:896px;top:341px;width:170px;height:1px;background:#464646"></div>
<svg style="left:900px;top:350px" width="6" height="4" viewBox="0 0 6 4"><path d="M0.5 0.5 L3 3 L5.5 0.5" stroke="#8a8a8a" fill="none" stroke-width="0.8"/></svg>
<div class="t" style="left:911px;top:350px;font-size:6.8px;color:#eaeaea;font-weight:bold">Quick Actions</div>
<!-- properties scrollbar -->
<div class="a" style="left:1066px;top:96px;width:8px;height:267px;background:#4a4a4a"></div>
<div class="a" style="left:1067px;top:105px;width:6px;height:222px;background:#6a6a6a"></div>
<div class="t" style="left:1067.5px;top:98px;font-size:5px;color:#888">&#708;</div>
<div class="t" style="left:1067.5px;top:357px;font-size:5px;color:#888">&#709;</div>
<div class="a" style="left:896px;top:384px;width:180px;height:1px;background:#3e3e3e"></div>
<!-- layers panel -->
<div class="a" style="left:896px;top:385px;width:180px;height:22px;background:#484848"></div>
<div class="a" style="left:896px;top:385px;width:30px;height:22px;background:#535353"></div>
<div class="t" style="left:901px;top:393px;font-size:6.5px;color:#eaeaea">Layers</div>
<svg style="left:1064px;top:393px" width="8" height="7" viewBox="0 0 8 7"><path d="M0 1H8M0 3.5H8M0 6H8" stroke="#cfcfcf" stroke-width="1"/></svg>
<div class="a" style="left:899px;top:413px;width:53px;height:12.5px;background:#454545"></div>
<svg style="left:902px;top:415px" width="8" height="8" viewBox="0 0 8 8"><circle cx="3.2" cy="3.2" r="2.3" stroke="#e0e0e0" fill="none" stroke-width="1.1"/><path d="M5 5 L7.5 7.5" stroke="#e0e0e0" stroke-width="1.4"/></svg>
<div class="t" style="left:912px;top:416.5px;font-size:6.5px;color:#e0e0e0">Kind</div>
<svg style="left:945px;top:418px" width="5" height="4" viewBox="0 0 5 4"><path d="M0.5 1 L2.5 3 L4.5 1" stroke="#9a9a9a" fill="none" stroke-width="0.8"/></svg>
<svg style="left:959px;top:415px" width="10" height="9" viewBox="0 0 10 9"><rect x="0.5" y="0.5" width="9" height="8" stroke="#d0d0d0" fill="none"/><path d="M2 7 L4 4.5 L6 6.5 L7 5.5 L8.5 7Z" fill="#d0d0d0"/></svg>
<svg style="left:974px;top:415px" width="9" height="9" viewBox="0 0 9 9"><circle cx="4.5" cy="4.5" r="4" stroke="#d0d0d0" fill="none"/><path d="M4.5 0.5 A4 4 0 0 0 4.5 8.5Z" fill="#d0d0d0"/></svg>
<svg style="left:988px;top:415px" width="10" height="9" viewBox="0 0 10 9"><path d="M1 1H9V2.5M1 1V2.5M5 1V8.5M3.5 8.5H6.5" stroke="#d8d8d8" fill="none" stroke-width="1.1"/></svg>
<svg style="left:1003px;top:415px" width="10" height="10" viewBox="0 0 10 10"><path d="M2.5 0V10M7.5 0V10M0 2.5H10M0 7.5H10" stroke="#d0d0d0" stroke-width="0.9"/></svg>
<svg style="left:1018px;top:414px" width="9" height="11" viewBox="0 0 9 11"><path d="M0.5 2H6.5L8.5 4V10.5H0.5Z" stroke="#d0d0d0" fill="none"/><rect x="1.5" y="5" width="5" height="5" fill="#d0d0d0"/></svg>
<svg style="left:1034px;top:411px" width="8" height="12" viewBox="0 0 8 12"><circle cx="4" cy="3.5" r="3" fill="#e8e8e8"/><path d="M4 6.5V11.5" stroke="#777" stroke-width="1"/></svg>
<div class="a" style="left:896px;top:429px;width:180px;height:1px;background:#4a4a4a"></div>
<div class="a" style="left:900px;top:434px;width:77px;height:12px;background:#4c4c4c"></div>
<div class="t" style="left:903px;top:437.5px;font-size:6.3px;color:#6e6e6e">Normal</div>
<div class="t" style="left:983px;top:437.5px;font-size:6.3px;color:#6e6e6e">Opacity:</div>
<div class="a" style="left:1010px;top:434px;width:20px;height:12px;background:#4c4c4c"></div>
<div class="t" style="left:1012px;top:437.5px;font-size:6px;color:#6a6a6a">100%</div>
<div class="a" style="left:896px;top:449px;width:180px;height:1px;background:#4a4a4a"></div>
<div class="t" style="left:900px;top:456.5px;font-size:6.3px;color:#6e6e6e">Lock:</div>
<svg style="left:920px;top:455px" width="8" height="8" viewBox="0 0 8 8"><path d="M0 0H2V2H0Z M4 0H6V2H4Z M2 2H4V4H2Z M6 2H8V4H6Z M0 4H2V6H0Z M4 4H6V6H4Z M2 6H4V8H2Z M6 6H8V8H6Z" fill="#8a8a8a"/></svg>
<svg style="left:933px;top:454px" width="9" height="9" viewBox="0 0 9 9"><path d="M8.5 0.5 L3 6" stroke="#8a8a8a" stroke-width="1.2"/><path d="M2.5 5.5 Q4 6.5 3 7.8 Q2 9 0.5 8.5 Q1 7 2.5 5.5Z" fill="#8a8a8a"/></svg>
<svg style="left:947px;top:454px" width="9" height="9" viewBox="0 0 9 9"><path d="M4.5 0V9M0 4.5H9" stroke="#8a8a8a"/><path d="M4.5 0 L3 1.5H6Z M4.5 9 L3 7.5H6Z M0 4.5 L1.5 3V6Z M9 4.5 L7.5 3V6Z" fill="#8a8a8a"/></svg>
<svg style="left:961px;top:454px" width="9" height="9" viewBox="0 0 9 9"><path d="M2 0V7H9 M0 2H7V9" stroke="#8a8a8a" fill="none"/></svg>
<svg style="left:975px;top:453px" width="8" height="10" viewBox="0 0 8 10"><path d="M2 4.5V3A2 2 0 0 1 6 3V4.5" stroke="#8a8a8a" fill="none" stroke-width="1.1"/><rect x="1" y="4.5" width="6" height="5" fill="#8a8a8a"/></svg>
<div class="t" style="left:1000px;top:456.5px;font-size:6.3px;color:#6e6e6e">Fill:</div>
<div class="a" style="left:1010px;top:453px;width:20px;height:12px;background:#4c4c4c"></div>
<div class="t" style="left:1012px;top:456.5px;font-size:6px;color:#6a6a6a">100%</div>
<div class="a" style="left:896px;top:469px;width:180px;height:1px;background:#4a4a4a"></div>
<div class="a" style="left:896px;top:470px;width:170px;height:235.5px;overflow:hidden">
<div class="a" style="left:0;top:-1.0px;width:170px;height:17.7px;border-bottom:1px solid #4a4a4a"></div>
<div class="a" style="left:18px;top:-1.0px;width:1px;height:17.7px;background:#4d4d4d"></div>
<svg style="left:5px;top:6.7px" width="9" height="5" viewBox="0 0 9 5"><path d="M0.5 2.5 Q4.5 -1.5 8.5 2.5 Q4.5 6.5 0.5 2.5Z" stroke="#cfcfcf" fill="none" stroke-width="0.9"/><circle cx="4.5" cy="2.5" r="1.2" fill="#cfcfcf"/></svg>
<svg style="left:32px;top:5.9px" width="5" height="4" viewBox="0 0 5 4"><path d="M0.5 1 L2.5 3 L4.5 1" stroke="#9a9a9a" fill="none" stroke-width="0.8"/></svg>
<svg style="left:39px;top:3.9px" width="10" height="8" viewBox="0 0 10 8"><path d="M0 0H4L5 1.5H10V8H0Z" fill="#e6e6e6"/><path d="M0 2.5H10" stroke="#535353" stroke-width="0.6"/></svg>
<div class="t" style="left:55px;top:5.6px;font-size:6.3px;color:#e6e6e6">edite text</div>
<div class="a" style="left:0;top:16.7px;width:170px;height:27.7px;border-bottom:1px solid #4a4a4a"></div>
<div class="a" style="left:18px;top:16.7px;width:1px;height:27.7px;background:#4d4d4d"></div>
<svg style="left:5px;top:29.3px" width="9" height="5" viewBox="0 0 9 5"><path d="M0.5 2.5 Q4.5 -1.5 8.5 2.5 Q4.5 6.5 0.5 2.5Z" stroke="#cfcfcf" fill="none" stroke-width="0.9"/><circle cx="4.5" cy="2.5" r="1.2" fill="#cfcfcf"/></svg>
<div class="t" style="left:47.5px;top:25.0px;font-size:14px;color:#e6e6e6;font-family:'Liberation Serif',serif">T</div>
<div class="t" style="left:67px;top:28.5px;font-size:6.3px;color:#e6e6e6">Layer 2</div>
<div class="a" style="left:0;top:44.4px;width:170px;height:28.9px;border-bottom:1px solid #4a4a4a"></div>
<div class="a" style="left:18px;top:44.4px;width:1px;height:28.9px;background:#4d4d4d"></div>
<svg style="left:5px;top:57.6px" width="9" height="5" viewBox="0 0 9 5"><path d="M0.5 2.5 Q4.5 -1.5 8.5 2.5 Q4.5 6.5 0.5 2.5Z" stroke="#cfcfcf" fill="none" stroke-width="0.9"/><circle cx="4.5" cy="2.5" r="1.2" fill="#cfcfcf"/></svg>
<div class="a" style="left:42px;top:48.3px;width:15.5px;height:21px;background:conic-gradient(#ccc 0 25%,#fff 0 50%,#ccc 0 75%,#fff 0) 0 0/4px 4px;border:1px solid #3a3a3a"></div>
<div class="a" style="left:44px;top:50.3px;width:3px;height:3px;background:#a04030"></div>
<div class="t" style="left:63px;top:56.8px;font-size:6.3px;color:#e6e6e6">Layer 3</div>
<div class="a" style="left:0;top:73.3px;width:170px;height:27.7px;border-bottom:1px solid #4a4a4a"></div>
<div class="a" style="left:18px;top:73.3px;width:1px;height:27.7px;background:#4d4d4d"></div>
<svg style="left:5px;top:85.9px" width="9" height="5" viewBox="0 0 9 5"><path d="M0.5 2.5 Q4.5 -1.5 8.5 2.5 Q4.5 6.5 0.5 2.5Z" stroke="#cfcfcf" fill="none" stroke-width="0.9"/><circle cx="4.5" cy="2.5" r="1.2" fill="#cfcfcf"/></svg>
<div class="t" style="left:47.5px;top:81.6px;font-size:14px;color:#e6e6e6;font-family:'Liberation Serif',serif">T</div>
<div class="t" style="left:67px;top:85.1px;font-size:6.3px;color:#e6e6e6">ctba0000000....&lt;&lt;&lt;&lt;&lt;&lt;&lt;&lt;&lt;0 d</div>
<div class="a" style="left:0;top:101.0px;width:170px;height:29.0px;border-bottom:1px solid #4a4a4a"></div>
<div class="a" style="left:18px;top:101.0px;width:1px;height:29.0px;background:#4d4d4d"></div>
<div class="a" style="left:7px;top:111.5px;width:5px;height:8px;border-left:1px solid #5c5c5c;border-bottom:1px solid #5c5c5c"></div>
<div class="t" style="left:47.5px;top:110.0px;font-size:14px;color:#e6e6e6;font-family:'Liberation Serif',serif">T</div>
<div class="t" style="left:67px;top:113.5px;font-size:6.3px;color:#e6e6e6">1ae</div>
<div class="a" style="left:0;top:130.0px;width:170px;height:28.5px;border-bottom:1px solid #4a4a4a"></div>
<div class="a" style="left:18px;top:130.0px;width:1px;height:28.5px;background:#4d4d4d"></div>
<svg style="left:5px;top:143.1px" width="9" height="5" viewBox="0 0 9 5"><path d="M0.5 2.5 Q4.5 -1.5 8.5 2.5 Q4.5 6.5 0.5 2.5Z" stroke="#cfcfcf" fill="none" stroke-width="0.9"/><circle cx="4.5" cy="2.5" r="1.2" fill="#cfcfcf"/></svg>
<div class="t" style="left:47.5px;top:138.8px;font-size:14px;color:#e6e6e6;font-family:'Liberation Serif',serif">T</div>
<div class="t" style="left:67px;top:142.2px;font-size:6.3px;color:#e6e6e6">169</div>
<div class="a" style="left:0;top:158.5px;width:170px;height:28.5px;border-bottom:1px solid #4a4a4a"></div>
<div class="a" style="left:18px;top:158.5px;width:1px;height:28.5px;background:#4d4d4d"></div>
<svg style="left:5px;top:171.6px" width="9" height="5" viewBox="0 0 9 5"><path d="M0.5 2.5 Q4.5 -1.5 8.5 2.5 Q4.5 6.5 0.5 2.5Z" stroke="#cfcfcf" fill="none" stroke-width="0.9"/><circle cx="4.5" cy="2.5" r="1.2" fill="#cfcfcf"/></svg>
<div class="t" style="left:47.5px;top:167.2px;font-size:14px;color:#e6e6e6;font-family:'Liberation Serif',serif">T</div>
<div class="t" style="left:67px;top:170.8px;font-size:6.3px;color:#e6e6e6">m</div>
<div class="a" style="left:0;top:187.0px;width:170px;height:28.5px;border-bottom:1px solid #4a4a4a"></div>
<div class="a" style="left:18px;top:187.0px;width:1px;height:28.5px;background:#4d4d4d"></div>
<svg style="left:5px;top:200.1px" width="9" height="5" viewBox="0 0 9 5"><path d="M0.5 2.5 Q4.5 -1.5 8.5 2.5 Q4.5 6.5 0.5 2.5Z" stroke="#cfcfcf" fill="none" stroke-width="0.9"/><circle cx="4.5" cy="2.5" r="1.2" fill="#cfcfcf"/></svg>
<div class="t" style="left:47.5px;top:195.8px;font-size:14px;color:#e6e6e6;font-family:'Liberation Serif',serif">T</div>
<div class="t" style="left:67px;top:199.2px;font-size:6.3px;color:#e6e6e6">129 1 a</div>
<div class="a" style="left:0;top:215.5px;width:170px;height:28.5px;border-bottom:1px solid #4a4a4a"></div>
<div class="a" style="left:18px;top:215.5px;width:1px;height:28.5px;background:#4d4d4d"></div>
<svg style="left:5px;top:228.6px" width="9" height="5" viewBox="0 0 9 5"><path d="M0.5 2.5 Q4.5 -1.5 8.5 2.5 Q4.5 6.5 0.5 2.5Z" stroke="#cfcfcf" fill="none" stroke-width="0.9"/><circle cx="4.5" cy="2.5" r="1.2" fill="#cfcfcf"/></svg>
<div class="t" style="left:47.5px;top:224.2px;font-size:14px;color:#e6e6e6;font-family:'Liberation Serif',serif">T</div>
<div class="t" style="left:67px;top:227.8px;font-size:6.3px;color:#e6e6e6">01.01.1990</div>
</div>
<div class="a" style="left:1066.5px;top:470px;width:7px;height:235px;background:#4a4a4a"></div>
<div class="a" style="left:1067px;top:490px;width:6px;height:66px;background:#6a6a6a"></div>
<div class="t" style="left:1067.5px;top:473px;font-size:5px;color:#888">&#708;</div>
<div class="t" style="left:1067.5px;top:697px;font-size:5px;color:#888">&#709;</div>
<div class="a" style="left:896px;top:705.5px;width:180px;height:14.5px;background:#535353;border-top:1px solid #474747"></div>
<svg style="left:947px;top:709.5px" width="10" height="6" viewBox="0 0 10 6"><rect x="0.5" y="0.5" width="4.5" height="5" rx="2.2" stroke="#7a7a7a" fill="none"/><rect x="5" y="0.5" width="4.5" height="5" rx="2.2" stroke="#7a7a7a" fill="none"/></svg>
<svg style="left:965px;top:708.0px" width="9" height="9" viewBox="0 0 9 9"><text x="0" y="8" font-size="8" font-style="italic" fill="#9a9a9a" font-family="Liberation Serif">fx</text></svg>
<svg style="left:981px;top:708.5px" width="10" height="9" viewBox="0 0 10 9"><rect x="0.5" y="0.5" width="9" height="8" stroke="#d8d8d8" fill="none"/><circle cx="5" cy="4.5" r="2.5" fill="#d8d8d8"/></svg>
<svg style="left:999px;top:708.5px" width="9" height="9" viewBox="0 0 9 9"><circle cx="4.5" cy="4.5" r="4" stroke="#d8d8d8" fill="none"/><path d="M4.5 0.5 A4 4 0 0 0 4.5 8.5Z" fill="#d8d8d8"/></svg>
<svg style="left:1015px;top:709.0px" width="10" height="8" viewBox="0 0 10 8"><path d="M0 0H4L5 1.5H10V8H0Z" fill="#e0e0e0"/></svg>
<svg style="left:1032px;top:708.0px" width="9" height="10" viewBox="0 0 9 10"><rect x="0.5" y="0.5" width="8" height="9" stroke="#d8d8d8" fill="none"/><path d="M4.5 2.5V7.5M2 5H7" stroke="#d8d8d8"/></svg>
<svg style="left:1049px;top:708.0px" width="8" height="10" viewBox="0 0 8 10"><path d="M0 1.5H8M3 1.5V0.5H5V1.5M1 2.5V9.5H7V2.5" stroke="#7a7a7a" fill="none"/></svg></body></html>
